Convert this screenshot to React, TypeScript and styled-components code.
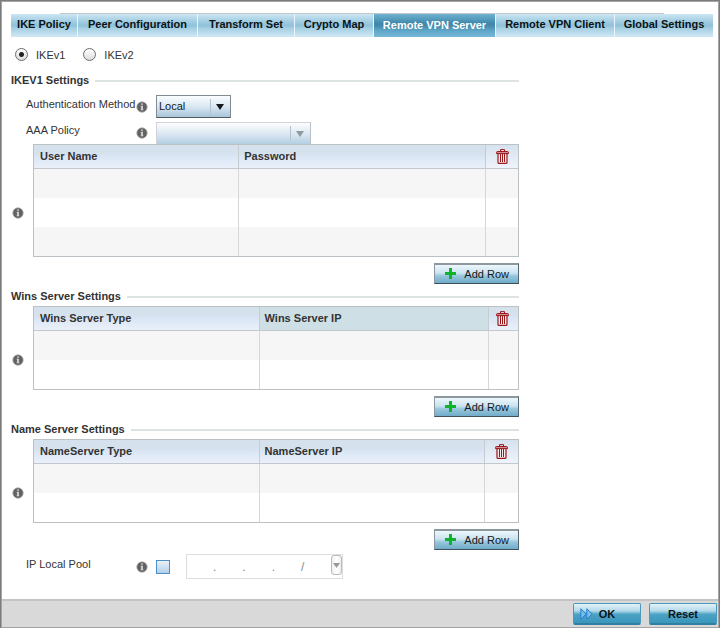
import React from "react";
import styled, { createGlobalStyle, css } from "styled-components";

const GlobalStyle = createGlobalStyle`
  *, *::before, *::after { box-sizing: border-box; }
  body { margin: 0; background: #fff; }
  body, button, input, select { font-family: "Liberation Sans", Arial, sans-serif; font-size: 11px; color: #333; }
`;

const Window = styled.div`
  display: flex;
  flex-direction: column;
  min-height: 100vh;
  padding: 1px;
  border: 1px solid #7c7c7c;
  box-shadow: inset 0 0 0 1px #a4a4a4;
  background: #fff;
`;

const Tabs = styled.nav`
  position: relative;
  display: grid;
  grid-template-columns: 67fr 120fr 97fr 79fr 122fr 119fr 98fr;
  margin: 12px 5px 0 9px;
  &::before {
    content: "";
    position: absolute;
    top: -1px;
    left: 7%;
    right: 7%;
    height: 1px;
    background: #c3c8ca;
  }
`;

const Tab = styled.button<{ $active?: boolean }>`
  height: 23px;
  padding: 0 0 3px;
  border: 0;
  border-right: 1px solid #e9f5fb;
  font-weight: bold;
  white-space: nowrap;
  color: #0c1216;
  background: linear-gradient(#cbe6f4 0%, #a5cfe2 30%, #90c2da 50%, #a9d1e4 65%, #d0e8f5 100%);
  &:last-child { border-right: 0; }
  ${(p) =>
    p.$active &&
    css`
      padding: 0 0 1px;
      color: #fff;
      background: linear-gradient(#6fb2d0 0%, #4089ad 40%, #4389ac 50%, #61a9ca 75%, #7ab7d6 100%);
    `}
`;

const Content = styled.main`
  flex: 1;
  max-width: 517px;
  padding: 0 0 20px 9px;
`;

const RadioRow = styled.div`
  display: flex;
  align-items: center;
  gap: 18px;
  height: 35px;
  padding: 0 0 0 4px;
`;

const RadioLabel = styled.label`
  display: flex;
  align-items: center;
  gap: 8px;
`;

const Radio = styled.input`
  appearance: none;
  width: 13px;
  height: 13px;
  margin: 0;
  border: 1px solid #6d6d6d;
  border-radius: 50%;
  background: linear-gradient(#fff, #dcdcdc);
  &:checked {
    background: radial-gradient(circle, #222 0 2px, transparent 3px), linear-gradient(#fff, #dcdcdc);
  }
`;

const Heading = styled.h2`
  display: flex;
  align-items: center;
  gap: 6px;
  height: 16px;
  margin: 0;
  font-size: 11px;
  font-weight: bold;
  white-space: nowrap;
  &::after {
    content: "";
    flex: 1;
    height: 2px;
    margin-top: 2px;
    background: #dde3e3;
  }
`;

const Field = styled.div`
  display: grid;
  grid-template-columns: 110px 20px auto;
  justify-content: start;
  align-items: center;
  padding-left: 15px;
`;

const Fields = styled.div`
  display: grid;
  row-gap: 4px;
  padding-top: 7px;
`;

const FieldLabel = styled.label`
  padding-bottom: 6px;
`;

const SelectBox = styled.div<{ $wide?: boolean }>`
  position: relative;
  width: ${(p) => (p.$wide ? 155 : 75)}px;
  &::before {
    content: "";
    position: absolute;
    right: 20px;
    top: 4px;
    bottom: 4px;
    width: 1px;
    background: #b4c2cc;
  }
  &::after {
    content: "";
    position: absolute;
    right: 7px;
    top: 9px;
    border: 4px solid transparent;
    border-top: 6px solid ${(p) => (p.$wide ? "#8f9a9f" : "#14191c")};
    border-bottom: 0;
    pointer-events: none;
  }
`;

const Select = styled.select`
  appearance: none;
  display: block;
  width: 100%;
  height: 23px;
  padding: 0 22px 1px 2px;
  border: 1px solid #818b92;
  border-bottom-color: #525b62;
  border-radius: 0;
  color: #14191c;
  background: linear-gradient(#fafdff, #dbe8f2 50%, #a7c5da);
  &:disabled {
    height: 22px;
    opacity: 1;
    border-color: #d2d2d8 #b8bec6 #b0c6d6 #d2d2d8;
    border-bottom: 0;
    background: linear-gradient(#fdfdff, #dde8f3 50%, #b2cfe2);
  }
`;

const GridRow = styled.div<{ $gap?: boolean }>`
  display: flex;
  align-items: center;
  gap: 9px;
  padding-left: 1px;
  margin-top: ${(p) => (p.$gap ? 2 : 0)}px;
  > svg { flex: none; margin-top: 24px; }
`;

const Table = styled.table`
  flex: 1;
  table-layout: fixed;
  border-collapse: separate;
  border-spacing: 0;
  border: 1px solid #bcc1c5;
`;

const Th = styled.th<{ $tint?: boolean }>`
  height: 24px;
  padding: 0 6px 1px;
  text-align: left;
  border-bottom: 1px solid #c3c8ce;
  background: ${(p) => (p.$tint ? "#cfdfe6" : "linear-gradient(#d5e2ed 0 35%, #dae6f5 50%, #eaf0f9)")};
  & + & { padding-left: 5px; border-left: 1px solid #c6ccd2; }
  & + &:last-child { padding: 0; background: linear-gradient(#d5e2ed, #eff3fb); }
`;

const Tr = styled.tr`
  &:nth-child(odd) { background: #f6f6f6; }
`;

const Td = styled.td`
  height: 29px;
  padding: 0;
  & + & { border-left: 1px solid #d5d7d9; }
`;

const TrashButton = styled.button`
  display: block;
  margin: 0 auto;
  padding: 0;
  border: 0;
  background: none;
  svg { display: block; }
`;

const AddButton = styled.button`
  display: flex;
  align-items: center;
  justify-content: flex-end;
  gap: 8px;
  width: 85px;
  height: 21px;
  margin: 6px 0 4px auto;
  padding: 0 9px 1px;
  border: 1px solid #8d979e;
  border-top-width: 2px;
  border-right-color: #526570;
  border-bottom-color: #40505a;
  color: #14191c;
  background: linear-gradient(#edf7fc, #cae3ef 45%, #98c7dd 60%, #70acca);
`;

const PoolRow = styled(Field)`
  grid-template-columns: 110px 20px 30px auto;
`;

const Check = styled.input`
  appearance: none;
  width: 14px;
  height: 14px;
  margin: 0;
  border: 1px solid #4d8fc8;
  background: linear-gradient(#e9f1f9, #b3cfe9);
`;

const IpBox = styled.div`
  display: flex;
  align-items: center;
  width: 157px;
  height: 25px;
  border: 1px solid #dedede;
  font-size: 12px;
  color: #888;
`;

const Octet = styled.input`
  width: 26px;
  min-width: 0;
  padding: 0;
  border: 0;
  background: none;
`;

const Spinner = styled.button`
  display: grid;
  place-items: center;
  width: 11px;
  height: 20px;
  margin: 0 0 3px auto;
  padding: 0;
  border: 1px solid #bbb;
  border-radius: 3px;
  background: linear-gradient(90deg, #eee, #fff, #eee);
`;

const Footer = styled.footer`
  display: flex;
  align-items: center;
  justify-content: flex-end;
  gap: 8px;
  height: 28px;
  padding-right: 1px;
  border-top: 2px solid #c4c4c4;
  background: #d9d9d9;
`;

const FootButton = styled.button`
  position: relative;
  width: 68px;
  height: 22px;
  padding: 0;
  border: 1px solid #4b9abb;
  border-bottom: 2px solid #2f7fa1;
  border-radius: 2px;
  font-weight: bold;
  color: #0c1216;
  background: linear-gradient(#e3f2f8, #b5dae9 35%, #4ba2c5 55%, #3a96bc);
  svg { position: absolute; left: 6px; top: 4px; }
`;

const InfoIcon = () => (
  <svg width="12" height="12" viewBox="0 0 12 12" role="img" aria-label="Info">
    <circle cx="6" cy="6" r="5.2" fill="#626262" stroke="#a9a9a9" strokeWidth="0.8" />
    <path d="M5 2.5h2v1.3H5zM4.7 4.8H7V8.2h.4v1.1H4.6V8.2H5V5.9h-.3z" fill="#ccc" />
  </svg>
);

const TrashIcon = () => (
  <svg width="13" height="15" viewBox="0 0 13 15" fill="none" stroke="#98181c" aria-hidden="true">
    <path d="M2 4V13.5Q2 14.4 3 14.4H10Q11 14.4 11 13.5V4z" fill="#fbecee" strokeWidth="1.2" />
    <path d="M4.5 5V13M6.5 5V13M8.5 5V13" />
    <path d="M4.5 2.5V.6H8.5V2.5" />
    <path d="M.5 4.6V3.6Q.5 2.5 1.6 2.5H11.4Q12.5 2.5 12.5 3.6V4.6z" fill="#d58d93" />
  </svg>
);

const PlusIcon = () => (
  <svg width="11" height="11" viewBox="0 0 11 11" aria-hidden="true">
    <path d="M4 0h3v4h4v3H7v4H4V7H0V4h4z" fill="#0eb32b" />
  </svg>
);

const ForwardIcon = () => (
  <svg width="13" height="12" viewBox="0 0 13 12" aria-hidden="true">
    <path d="M.8.8 6.2 6 .8 11.2zM6.8.8 12.2 6 6.8 11.2z" fill="#78bdf0" stroke="#257fc9" strokeLinejoin="round" />
  </svg>
);

type GridProps = { columns: [string, string]; widths: [string, string, string]; rows: number; tint?: boolean; gap?: boolean };

const SettingsGrid = ({ columns, widths, rows, tint, gap }: GridProps) => (
  <>
    <GridRow $gap={gap}>
      <InfoIcon />
      <Table>
        <colgroup>
          {widths.map((w, i) => (
            <col key={i} width={w} />
          ))}
        </colgroup>
        <thead>
          <tr>
            <Th>{columns[0]}</Th>
            <Th $tint={tint}>{columns[1]}</Th>
            <Th>
              <TrashButton type="button" aria-label="Delete">
                <TrashIcon />
              </TrashButton>
            </Th>
          </tr>
        </thead>
        <tbody>
          {Array.from({ length: rows }, (_, i) => (
            <Tr key={i}>
              <Td />
              <Td />
              <Td />
            </Tr>
          ))}
        </tbody>
      </Table>
    </GridRow>
    <AddButton type="button">
      <PlusIcon />
      Add Row
    </AddButton>
  </>
);

const tabs = ["IKE Policy", "Peer Configuration", "Transform Set", "Crypto Map", "Remote VPN Server", "Remote VPN Client", "Global Settings"];

export default function App() {
  return (
    <>
      <GlobalStyle />
      <Window>
        <Tabs>
          {tabs.map((t) => (
            <Tab key={t} type="button" $active={t === "Remote VPN Server"}>
              {t}
            </Tab>
          ))}
        </Tabs>
        <Content>
          <RadioRow>
            <RadioLabel>
              <Radio type="radio" name="ike" defaultChecked />
              IKEv1
            </RadioLabel>
            <RadioLabel>
              <Radio type="radio" name="ike" />
              IKEv2
            </RadioLabel>
          </RadioRow>

          <Heading>IKEV1 Settings</Heading>
          <Fields>
            <Field>
              <FieldLabel htmlFor="auth">Authentication Method</FieldLabel>
              <InfoIcon />
              <SelectBox>
                <Select id="auth" defaultValue="Local">
                  <option>Local</option>
                </Select>
              </SelectBox>
            </Field>
            <Field>
              <FieldLabel htmlFor="aaa">AAA Policy</FieldLabel>
              <InfoIcon />
              <SelectBox $wide>
                <Select id="aaa" disabled />
              </SelectBox>
            </Field>
          </Fields>
          <SettingsGrid columns={["User Name", "Password"]} widths={["42.2%", "51%", "6.8%"]} rows={3} />

          <Heading>Wins Server Settings</Heading>
          <SettingsGrid columns={["Wins Server Type", "Wins Server IP"]} widths={["46.4%", "47.4%", "6.2%"]} rows={2} tint gap />

          <Heading>Name Server Settings</Heading>
          <SettingsGrid columns={["NameServer Type", "NameServer IP"]} widths={["46.4%", "46.5%", "7.1%"]} rows={2} gap />

          <PoolRow>
            <FieldLabel htmlFor="pool">IP Local Pool</FieldLabel>
            <InfoIcon />
            <Check type="checkbox" id="pool" />
            <IpBox>
              <Octet aria-label="First octet" />.
              <Octet aria-label="Second octet" />.
              <Octet aria-label="Third octet" />.
              <Octet aria-label="Fourth octet" />/
              <Spinner type="button" aria-label="Prefix length">
                <svg width="7" height="5" viewBox="0 0 7 5" aria-hidden="true">
                  <path d="M0 0h7L3.5 5z" fill="#999" />
                </svg>
              </Spinner>
            </IpBox>
          </PoolRow>
        </Content>
        <Footer>
          <FootButton type="button">
            <ForwardIcon />
            OK
          </FootButton>
          <FootButton type="button">Reset</FootButton>
        </Footer>
      </Window>
    </>
  );
}
